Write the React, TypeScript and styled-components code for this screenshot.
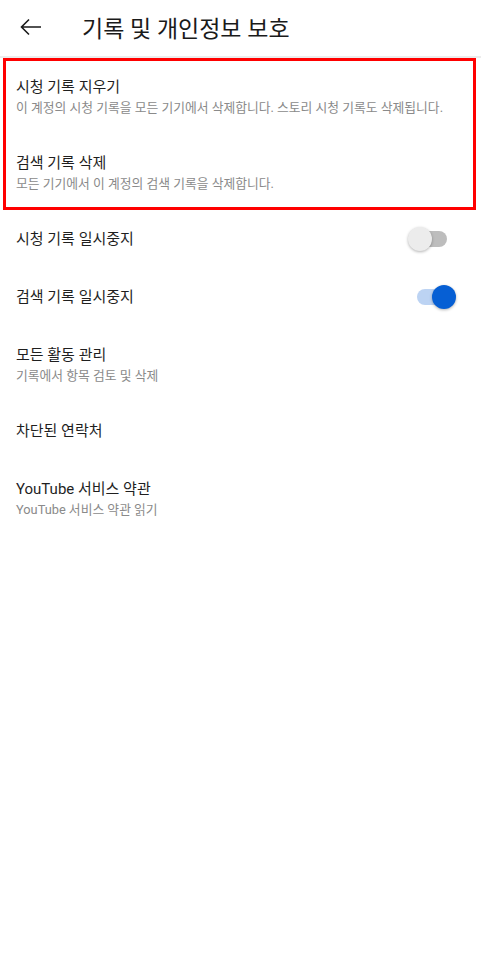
import React, { useState } from 'react';
import styled, { createGlobalStyle } from 'styled-components';

const GlobalStyle = createGlobalStyle`
  * {
    box-sizing: border-box;
  }
  body {
    margin: 0;
    background: #ffffff;
    font-family: Roboto, "Noto Sans CJK KR", sans-serif;
    color: #1f1f1f;
  }
`;

const Page = styled.div`
  width: 481px;
  min-height: 957px;
  background: #ffffff;
`;

const Header = styled.header`
  height: 58px;
  display: flex;
  align-items: center;
  padding: 0 0 2px 19px;
  border-bottom: 2px solid #ececec;
`;

const BackButton = styled.button`
  width: 24px;
  height: 24px;
  padding: 0;
  border: none;
  background: none;
  display: flex;
  align-items: center;
  justify-content: center;
  cursor: pointer;
`;

const HeaderTitle = styled.h1`
  margin: 0 0 0 39px;
  font-size: 23px;
  font-weight: 400;
  color: #1a1a1a;
`;

const HighlightGroup = styled.div`
  position: relative;

  &::after {
    content: '';
    position: absolute;
    top: 0;
    left: 3px;
    right: 5px;
    bottom: 0;
    border: 3px solid #ff0000;
    pointer-events: none;
  }
`;

const Row = styled.div<{ $tall?: boolean }>`
  height: ${(props) => (props.$tall ? '76px' : '58px')};
  display: flex;
  align-items: ${(props) => (props.$tall ? 'flex-start' : 'center')};
  padding: ${(props) => (props.$tall ? '19px 25px 0 16px' : '0 25px 0 16px')};
`;

const RowText = styled.div`
  flex: 1;
  display: flex;
  flex-direction: column;
  gap: 2px;
`;

const RowTitle = styled.div`
  font-size: 15px;
  line-height: 20px;
  color: #1f1f1f;
`;

const RowSub = styled.div`
  font-size: 12.8px;
  line-height: 17px;
  color: #8a8a8a;
`;

const SwitchTrack = styled.button<{ $on: boolean }>`
  position: relative;
  width: 30px;
  height: 16px;
  margin-right: 9px;
  padding: 0;
  border: none;
  border-radius: 8px;
  background: ${(props) => (props.$on ? '#bcd3f3' : '#bdbdbd')};
  cursor: pointer;
`;

const SwitchThumb = styled.span<{ $on: boolean }>`
  position: absolute;
  top: -4px;
  left: ${(props) => (props.$on ? '15px' : '-9px')};
  width: 24px;
  height: 24px;
  border-radius: 50%;
  background: ${(props) => (props.$on ? '#065fd4' : '#ececec')};
  box-shadow: 0 1px 3px rgba(0, 0, 0, 0.3);
`;

const Toggle = ({ on, onChange }: { on: boolean; onChange: () => void }) => (
  <SwitchTrack $on={on} onClick={onChange} aria-pressed={on}>
    <SwitchThumb $on={on} />
  </SwitchTrack>
);

const App = () => {
  const [watchPaused, setWatchPaused] = useState(false);
  const [searchPaused, setSearchPaused] = useState(true);

  return (
    <Page>
      <GlobalStyle />
      <Header>
        <BackButton aria-label="back">
          <svg width="24" height="24" viewBox="0 0 24 24" fill="none" stroke="#1a1a1a" strokeWidth="1.6">
            <path d="M22 12H2.5M10 4.5L2.5 12l7.5 7.5" />
          </svg>
        </BackButton>
        <HeaderTitle>기록 및 개인정보 보호</HeaderTitle>
      </Header>

      <HighlightGroup>
        <Row $tall>
          <RowText>
            <RowTitle>시청 기록 지우기</RowTitle>
            <RowSub>이 계정의 시청 기록을 모든 기기에서 삭제합니다. 스토리 시청 기록도 삭제됩니다.</RowSub>
          </RowText>
        </Row>
        <Row $tall>
          <RowText>
            <RowTitle>검색 기록 삭제</RowTitle>
            <RowSub>모든 기기에서 이 계정의 검색 기록을 삭제합니다.</RowSub>
          </RowText>
        </Row>
      </HighlightGroup>

      <Row>
        <RowText>
          <RowTitle>시청 기록 일시중지</RowTitle>
        </RowText>
        <Toggle on={watchPaused} onChange={() => setWatchPaused(!watchPaused)} />
      </Row>
      <Row>
        <RowText>
          <RowTitle>검색 기록 일시중지</RowTitle>
        </RowText>
        <Toggle on={searchPaused} onChange={() => setSearchPaused(!searchPaused)} />
      </Row>
      <Row $tall>
        <RowText>
          <RowTitle>모든 활동 관리</RowTitle>
          <RowSub>기록에서 항목 검토 및 삭제</RowSub>
        </RowText>
      </Row>
      <Row>
        <RowText>
          <RowTitle>차단된 연락처</RowTitle>
        </RowText>
      </Row>
      <Row $tall>
        <RowText>
          <RowTitle>YouTube 서비스 약관</RowTitle>
          <RowSub>YouTube 서비스 약관 읽기</RowSub>
        </RowText>
      </Row>
    </Page>
  );
};

export default App;
